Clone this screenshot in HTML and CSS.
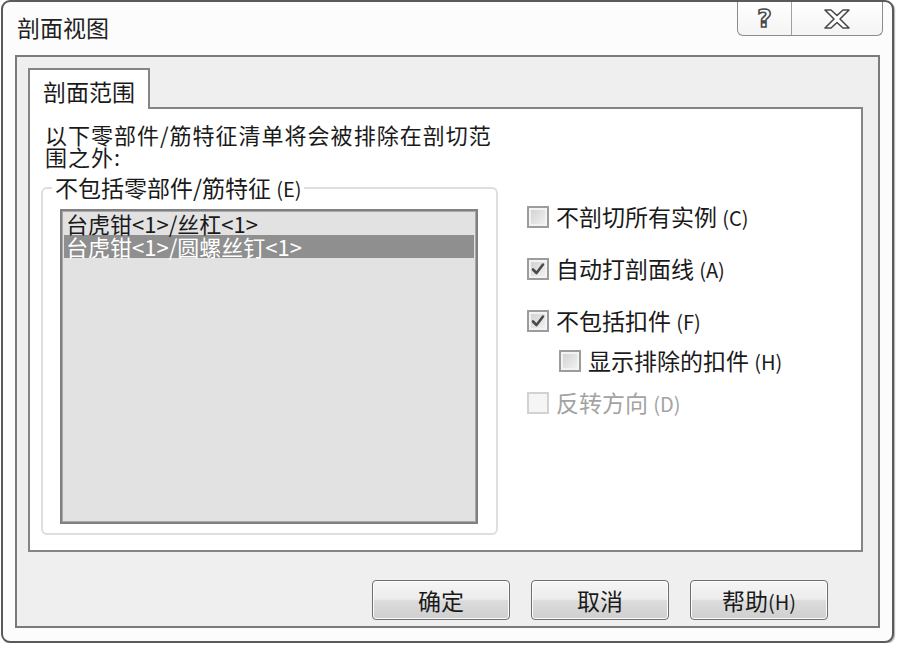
FILE: index.html
```html
<!DOCTYPE html>
<html lang="zh-CN">
<head>
<meta charset="utf-8">
<title>剖面视图</title>
<link rel="stylesheet" href="styles.css">
</head>
<body>
<div class="window">
  <div class="titlebar">
    <div class="title">剖面视图</div>
    <div class="caption">
      <div class="cap-btn cap-help"><span class="help-glyph">?</span></div>
      <div class="cap-btn cap-close">
        <svg width="26" height="20" viewBox="-1 -1 26 20"><polygon points="0,0 6,0 12,5.5 18,0 24,0 15,9 24,18 18,18 12,12.5 6,18 0,18 9,9" fill="#fff" stroke="#4a4a4a" stroke-width="1.6" stroke-linejoin="round"/></svg>
      </div>
    </div>
  </div>
  <div class="panel">
    <div class="tab">剖面范围</div>
    <div class="page">
      <div class="desc">以下零部件/筋特征清单将会被排除在剖切范<br>围之外:</div>
      <div class="page-row">
        <fieldset class="group">
          <legend>不包括零部件/筋特征 <span class="acc">(E)</span></legend>
          <div class="list">
            <div class="item">台虎钳&lt;1&gt;/丝杠&lt;1&gt;</div>
            <div class="item selected">台虎钳&lt;1&gt;/圆螺丝钉&lt;1&gt;</div>
          </div>
        </fieldset>
        <div class="options">
          <div class="check">
            <span class="box"></span><span>不剖切所有实例 <span class="acc">(C)</span></span>
          </div>
          <div class="check gap">
            <span class="box"><svg viewBox="0 0 18 18" width="18" height="18"><path d="M4 9.5 L7.5 13 L14 4.5" fill="none" stroke="#4a4a4a" stroke-width="2.6" stroke-linecap="round" stroke-linejoin="round"/></svg></span><span>自动打剖面线 <span class="acc">(A)</span></span>
          </div>
          <div class="check gap">
            <span class="box"><svg viewBox="0 0 18 18" width="18" height="18"><path d="M4 9.5 L7.5 13 L14 4.5" fill="none" stroke="#4a4a4a" stroke-width="2.6" stroke-linecap="round" stroke-linejoin="round"/></svg></span><span>不包括扣件 <span class="acc">(F)</span></span>
          </div>
          <div class="check sub">
            <span class="box"></span><span>显示排除的扣件 <span class="acc">(H)</span></span>
          </div>
          <div class="check disabled last">
            <span class="box"></span><span>反转方向 <span class="acc">(D)</span></span>
          </div>
        </div>
      </div>
    </div>
    <div class="buttons">
      <div class="btn">确定</div>
      <div class="btn">取消</div>
      <div class="btn">帮助<span class="acc-btn">(H)</span></div>
    </div>
  </div>
</div>
</body>
</html>
```
FILE: styles.css
```css
html, body {
  margin: 0;
  padding: 0;
  background: #ffffff;
}

body {
  font-family: "Noto Sans CJK SC", "Noto Sans", sans-serif;
  color: #1a1a1a;
}

.window {
  box-sizing: border-box;
  width: 893px;
  height: 643px;
  margin-left: 1px;
  border: 2px solid #5a5a5a;
  border-radius: 9px;
  background: #fcfcfc;
  box-shadow: 1px 1px 1px #b0b0b0;
  display: flex;
  flex-direction: column;
}

.titlebar {
  height: 53px;
  display: flex;
  justify-content: space-between;
  align-items: flex-start;
  padding-left: 14px;
  padding-right: 9px;
}

.title {
  font-size: 23px;
  line-height: 24px;
  margin-top: 13px;
  color: #222;
}

.caption {
  display: flex;
  height: 34px;
  border: 1px solid #8c8c8c;
  border-top: none;
  border-radius: 0 0 6px 6px;
  background: linear-gradient(#ffffff, #f4f4f4);
  box-sizing: border-box;
}

.cap-btn {
  display: flex;
  align-items: center;
  justify-content: center;
}

.cap-help {
  width: 53px;
  border-right: 1px solid #a0a0a0;
}

.cap-close {
  width: 90px;
}

.help-glyph {
  font-family: "DejaVu Sans", sans-serif;
  font-weight: bold;
  font-size: 25px;
  line-height: 26px;
  color: #ffffff;
  -webkit-text-stroke: 1.6px #4a4a4a;
}

.panel {
  box-sizing: border-box;
  height: 573px;
  margin: 0 12px;
  border: 2px solid #7a7a7a;
  background: #efefef;
  padding: 11px 15px 0 11px;
  display: flex;
  flex-direction: column;
}

.tab {
  align-self: flex-start;
  box-sizing: border-box;
  height: 41px;
  width: 122px;
  border: 2px solid #858585;
  border-bottom: none;
  background: #ffffff;
  padding: 8px 0 0 13px;
  margin-bottom: -2px;
  position: relative;
  z-index: 1;
  font-size: 23px;
  line-height: 26px;
}

.page {
  box-sizing: border-box;
  height: 445px;
  border: 2px solid #858585;
  background: #ffffff;
}

.desc {
  font-size: 22px;
  line-height: 22px;
  letter-spacing: 1px;
  padding: 14px 0 0 15px;
}

.page-row {
  display: flex;
  align-items: flex-start;
  margin-top: 8px;
}

.group {
  box-sizing: border-box;
  width: 457px;
  margin: 0 0 0 11px;
  border: 2px solid #dedede;
  border-radius: 6px;
  padding: 8px 18px 9px 17px;
  min-width: 0;
}

.group legend {
  font-size: 23px;
  line-height: 24px;
  padding: 0 3px;
  margin-left: -8px;
}

.acc {
  font-size: 20px;
}

.list {
  box-sizing: border-box;
  height: 315px;
  border: 2px solid #808080;
  box-shadow: inset 0 0 0 1px #a9a9a9;
  background: #e2e2e2;
  padding: 1px 2px;
}

.item {
  font-size: 22px;
  line-height: 23px;
  padding-left: 2px;
  white-space: nowrap;
}

.item.selected {
  background: #8f8f8f;
  color: #ffffff;
}

.options {
  margin-left: 29px;
  padding-top: 30px;
  display: flex;
  flex-direction: column;
}

.check {
  display: flex;
  align-items: center;
  gap: 7px;
  height: 24px;
  font-size: 23px;
  line-height: 24px;
  white-space: nowrap;
}

.check.gap {
  margin-top: 28px;
}

.check.sub {
  margin-top: 16px;
  margin-left: 32px;
}

.check.last {
  margin-top: 18px;
}

.box {
  box-sizing: border-box;
  width: 22px;
  height: 22px;
  border: 2px solid #9c9c9c;
  background: linear-gradient(135deg, #cfcfcf, #f4f4f4);
  box-shadow: inset 0 0 0 2px #f3f3f3;
  display: flex;
  align-items: center;
  justify-content: center;
  flex: none;
}

.check.disabled {
  color: #a3a3a3;
}

.check.disabled .box {
  border-color: #d2d2d2;
  background: #f5f5f5;
  box-shadow: none;
}

.buttons {
  display: flex;
  justify-content: flex-end;
  gap: 21px;
  margin-top: 28px;
  padding-right: 35px;
}

.btn {
  box-sizing: border-box;
  width: 138px;
  height: 40px;
  border: 1px solid #6f6f6f;
  border-radius: 4px;
  background: linear-gradient(#f5f5f5 0%, #ececec 48%, #dcdcdc 52%, #cfcfcf 100%);
  box-shadow: inset 0 0 0 1px #fbfbfb;
  font-size: 23px;
  line-height: 38px;
  text-align: center;
  color: #1a1a1a;
}

.acc-btn {
  font-size: 20px;
}
```
